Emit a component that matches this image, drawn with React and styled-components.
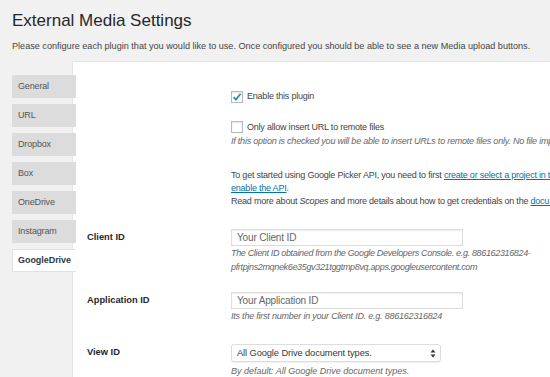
import React from 'react';
import styled, { createGlobalStyle } from 'styled-components';

const Global = createGlobalStyle`
  html, body { margin: 0; padding: 0; overflow: hidden; background: #f1f1f1; }
  body { font-family: "Liberation Sans", Arial, sans-serif; color: #444; }
`;

const Page = styled.div`
  width: 1000px;
  padding-left: 12px;
`;

const Title = styled.h1`
  margin: 0;
  padding-top: 9px;
  font-size: 17px;
  font-weight: 400;
  line-height: 23px;
  color: #23282d;
`;

const Intro = styled.p`
  margin: 8px 0 0;
  font-size: 9.1px;
  letter-spacing: 0;
  line-height: 13px;
  color: #444;
`;

const Layout = styled.div`
  display: flex;
  align-items: flex-start;
  margin-top: 8px;
`;

const TabList = styled.div`
  position: relative;
  z-index: 1;
  flex: 0 0 64px;
  margin-right: -4px;
  padding-top: 14px;
  display: flex;
  flex-direction: column;
  gap: 6px;
`;

const Tab = styled.div`
  box-sizing: border-box;
  height: 23px;
  padding-left: ${(p) => (p.$active ? 5 : 6)}px;
  line-height: ${(p) => (p.$active ? 21 : 23)}px;
  font-size: 9px;
  letter-spacing: ${(p) => (p.$active ? '-0.05px' : '-0.15px')};
  font-weight: ${(p) => (p.$active ? 700 : 400)};
  color: ${(p) => (p.$active ? '#32373c' : '#555')};
  background: ${(p) => (p.$active ? '#fff' : '#dcdcdc')};
  border: ${(p) => (p.$active ? '1px solid #e1e1e1' : 'none')};
  border-right: none;
`;

const Panel = styled.div`
  flex: 0 0 auto;
  width: 860px;
  min-height: 360px;
  background: #fff;
  border: 1px solid #e5e5e5;
  padding-left: 14px;
`;

const Row = styled.div`
  display: grid;
  grid-template-columns: 144px 470px;
  padding-top: ${(p) => p.$top}px;
`;

const Label = styled.div`
  font-size: 9.3px;
  font-weight: 700;
  line-height: 17px;
  color: #23282d;
`;

const Field = styled.div`
  grid-column: 2;
  font-size: 9px;
  letter-spacing: -0.22px;
  line-height: 13px;
  color: #444;
`;

const CheckLine = styled.label`
  display: flex;
  align-items: center;
  gap: 4px;
  height: 13px;
`;

const Box = styled.span`
  box-sizing: border-box;
  width: 12px;
  height: 12px;
  border: 1px solid #b4b9be;
  background: #fff;
  box-shadow: inset 0 1px 2px rgba(0, 0, 0, 0.1);
  display: inline-flex;
  align-items: center;
  justify-content: center;
`;

const Desc = styled.p`
  margin: ${(p) => p.$mt || 0}px 0 0;
  font-style: italic;
  font-size: 9px;
  letter-spacing: ${(p) => p.$ls ?? -0.22}px;
  line-height: ${(p) => p.$lh || 14}px;
  color: #666;
`;

const Text = styled.p`
  margin: 0;
`;

const Link = styled.a`
  color: #0073aa;
  text-decoration: underline;
`;

const Input = styled.div`
  box-sizing: border-box;
  width: 232px;
  height: 17px;
  border: 1px solid #ddd;
  box-shadow: inset 0 1px 2px rgba(0, 0, 0, 0.07);
  padding-left: 5px;
  font-size: 10px;
  letter-spacing: -0.15px;
  line-height: 15px;
  color: #666;
`;

const Select = styled.div`
  box-sizing: border-box;
  width: 210px;
  height: 18px;
  border: 1px solid #ddd;
  border-radius: 3px;
  box-shadow: 0 1px 1px rgba(0, 0, 0, 0.06);
  padding: 0 4px 0 5px;
  display: flex;
  align-items: center;
  justify-content: space-between;
  font-size: 9.3px;
  letter-spacing: -0.1px;
  color: #32373c;
  background: #fff;
`;

const Check = () => (
  <svg width="10" height="10" viewBox="0 0 10 10">
    <path d="M1.6 5.2 L3.9 7.6 L8.6 1.8" fill="none" stroke="#1e8cbe" strokeWidth="1.7" />
  </svg>
);

const Arrows = () => (
  <svg width="6" height="9" viewBox="0 0 6 9">
    <path d="M0.5 3.6 L3 0.6 L5.5 3.6 Z" fill="#333" />
    <path d="M0.5 5.4 L3 8.4 L5.5 5.4 Z" fill="#333" />
  </svg>
);

const tabs = ['General', 'URL', 'Dropbox', 'Box', 'OneDrive', 'Instagram', 'GoogleDrive'];

export default function App() {
  return (
    <>
      <Global />
      <Page>
        <Title>External Media Settings</Title>
        <Intro>
          Please configure each plugin that you would like to use. Once configured you should be able to see a new Media upload buttons.
        </Intro>
        <Layout>
          <TabList>
            {tabs.map((t) => (
              <Tab key={t} $active={t === 'GoogleDrive'}>{t}</Tab>
            ))}
          </TabList>
          <Panel>
            <Row $top={28}>
              <Field>
                <CheckLine>
                  <Box><Check /></Box>
                  Enable this plugin
                </CheckLine>
              </Field>
            </Row>
            <Row $top={17.5}>
              <Field>
                <CheckLine>
                  <Box />
                  Only allow insert URL to remote files
                </CheckLine>
                <Desc $mt={1} $lh={13}>
                  If this option is checked you will be able to insert URLs to remote files only. No file import will happen.
                </Desc>
              </Field>
            </Row>
            <Row $top={21}>
              <Field>
                <Text>
                  To get started using Google Picker API, you need to first{' '}
                  <Link>create or select a project in the Google Developers Console and enable the API</Link>.
                </Text>
                <Text>
                  Read more about <i>Scopes</i> and more details about how to get credentials on the{' '}
                  <Link>documentation</Link>.
                </Text>
              </Field>
            </Row>
            <Row $top={21.5}>
              <Label>Client ID</Label>
              <Field>
                <Input>Your Client ID</Input>
                <Desc $ls={-0.34}>
                  The Client ID obtained from the Google Developers Console. e.g. 886162316824-pfrtpjns2mqnek6e35gv321tggtmp8vq.apps.googleusercontent.com
                </Desc>
              </Field>
            </Row>
            <Row $top={18}>
              <Label>Application ID</Label>
              <Field>
                <Input>Your Application ID</Input>
                <Desc>Its the first number in your Client ID. e.g. 886162316824</Desc>
              </Field>
            </Row>
            <Row $top={21}>
              <Label>View ID</Label>
              <Field>
                <Select>
                  All Google Drive document types.
                  <Arrows />
                </Select>
                <Desc $mt={2} $ls={0}>By default: All Google Drive document types.</Desc>
              </Field>
            </Row>
          </Panel>
        </Layout>
      </Page>
    </>
  );
}
